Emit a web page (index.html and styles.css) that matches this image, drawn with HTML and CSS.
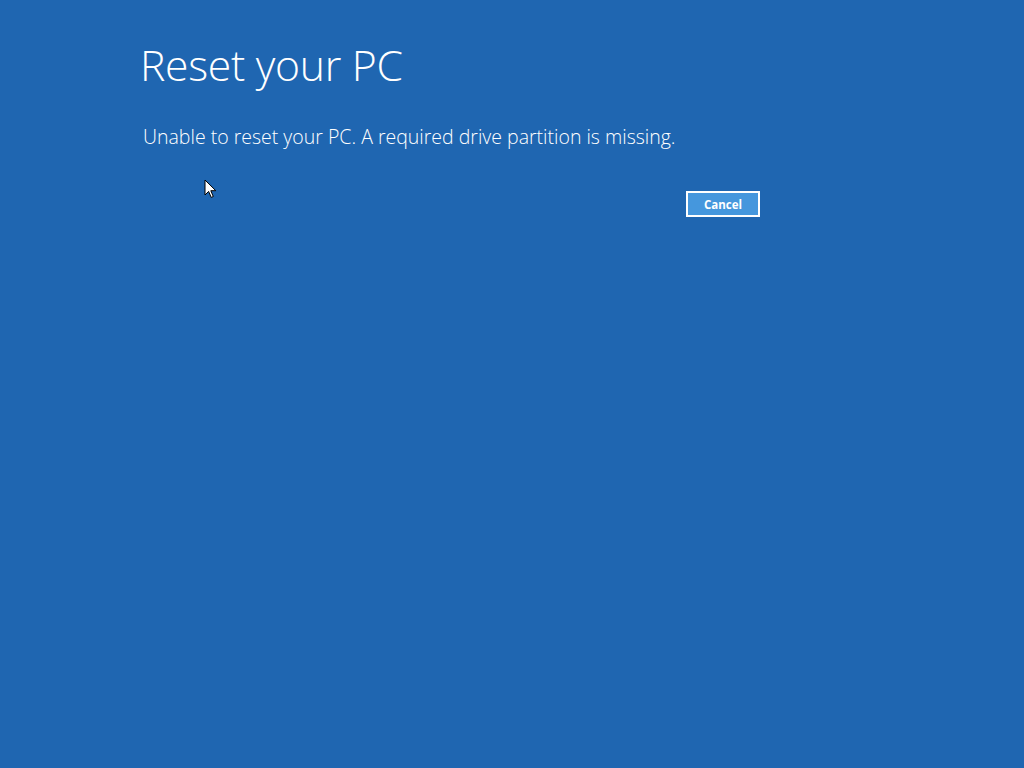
FILE: index.html
```html
<!DOCTYPE html>
<html lang="en">
<head>
<meta charset="utf-8">
<title>Reset your PC</title>
<link rel="stylesheet" href="styles.css">
</head>
<body>
<main class="screen">
  <section class="panel">
    <h1 class="title">Reset your PC</h1>
    <p class="message">Unable to reset your PC. A required drive partition is missing.</p>
    <div class="actions">
      <button class="btn" type="button">Cancel</button>
    </div>
  </section>
  <svg class="cursor" width="14" height="20" viewBox="0 0 14 20" aria-hidden="true">
    <path d="M1 1 L1 16 L4.6 12.4 L7.2 18.4 L9.3 17.5 L6.8 11.7 L11.8 11.7 Z" fill="#ffffff" stroke="#000000" stroke-width="1" stroke-linejoin="round"/>
  </svg>
</main>
</body>
</html>
```

FILE: styles.css
```css
html, body {
  margin: 0;
  padding: 0;
  height: 100%;
}
body {
  background: #1f66b1;
  font-family: "Open Sans", "Noto Sans", "Liberation Sans", sans-serif;
  color: #ffffff;
  overflow: hidden;
}
.screen {
  position: relative;
  width: 1024px;
  height: 768px;
}
.panel {
  padding: 35px 0 0 140px;
  width: 620px;
  display: flex;
  flex-direction: column;
}
.title {
  margin: 0;
  font-weight: 300;
  font-size: 42.7px;
  line-height: 60px;
  letter-spacing: -0.3px;
}
.message {
  margin: 29px 0 0 3px;
  font-weight: 300;
  font-size: 19.5px;
  line-height: 26px;
}
.actions {
  display: flex;
  justify-content: flex-end;
  margin-top: 41px;
}
.btn {
  width: 74px;
  height: 26px;
  background: #4597dd;
  border: 2px solid #ffffff;
  color: #ffffff;
  font-family: "Open Sans", "Liberation Sans", sans-serif;
  font-weight: 700;
  font-size: 11.5px;
  padding: 0;
  margin: 0;
}
.cursor {
  position: absolute;
  left: 204px;
  top: 179px;
}
```
